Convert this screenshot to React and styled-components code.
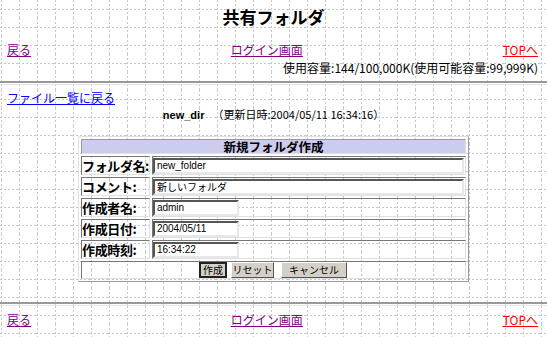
import React from 'react';
import styled, { createGlobalStyle } from 'styled-components';

const gridSvg = encodeURIComponent(
  "<svg xmlns='http://www.w3.org/2000/svg' width='18' height='18'>" +
    "<line x1='1.5' y1='0' x2='1.5' y2='18' stroke='#c8c8c8' stroke-width='1' stroke-dasharray='2 2'/>" +
    "<line x1='0' y1='9.5' x2='18' y2='9.5' stroke='#c8c8c8' stroke-width='1' stroke-dasharray='2 2'/>" +
    '</svg>'
);

const GlobalStyle = createGlobalStyle`
  html, body {
    margin: 0;
    padding: 0;
  }
  body {
    background: #fff url("data:image/svg+xml,${gridSvg}") 0 0 repeat;
    font-family: "Noto Sans CJK JP", "Liberation Sans", sans-serif;
    font-size: 12px;
    color: #000;
  }
`;

const Page = styled.div`
  width: 547px;
  height: 337px;
  overflow: hidden;
`;

const Title = styled.h1`
  margin: 0;
  padding-top: 5px;
  height: 34px;
  text-align: center;
  font-size: 17px;
  font-weight: bold;
  line-height: 24px;
`;

const NavRow = styled.div`
  display: flex;
  justify-content: space-between;
  align-items: center;
  padding: 0 9px 0 7px;
  height: 22px;
`;

const Link = styled.a`
  color: ${(p) => p.$color || '#800080'};
  text-decoration: underline;
  font-size: 12px;
  line-height: 14px;
  cursor: pointer;
`;

const Usage = styled.div`
  text-align: right;
  padding-right: 9px;
  font-size: 12px;
  line-height: 14px;
  height: 16px;
`;

const Rule = styled.div`
  height: 1px;
  border-top: 2px solid #999;
  border-bottom: 1px solid #e4e4e4;
  margin: ${(p) => p.$margin};
`;

const BackLink = styled.div`
  padding-left: 7px;
  height: 18px;
`;

const DirLine = styled.div`
  text-align: center;
  font-size: 11px;
  line-height: 14px;
`;

const DirName = styled.b`
  font-family: "Liberation Sans", sans-serif;
  margin-right: 8px;
`;

const FormWrap = styled.div`
  display: flex;
  justify-content: center;
  margin-top: 14px;
`;

const FormTable = styled.table`
  width: 389px;
  border: 1px solid;
  border-color: #e0e0e0 #999 #999 #e0e0e0;
  border-spacing: 2px;
  border-collapse: separate;
`;

const HeadCell = styled.th`
  background: #ccccee;
  font-size: 12.5px;
  font-weight: bold;
  line-height: 13px;
  height: 13px;
  padding: 0;
  text-align: center;
  border: 1px solid;
  border-color: #999 #e0e0e0 #e0e0e0 #999;
`;

const LabelCell = styled.td`
  width: 65px;
  height: 17px;
  font-size: 13px;
  letter-spacing: -0.4px;
  font-weight: bold;
  line-height: 17px;
  padding: 0;
  white-space: nowrap;
  overflow: hidden;
  border: 1px solid;
  border-color: #777 #e0e0e0 #e0e0e0 #777;
`;

const FieldCell = styled.td`
  height: ${(p) => p.$h || 17}px;
  padding: 0 1px 0 0;
  border: 1px solid;
  border-color: #777 #e0e0e0 #e0e0e0 #777;
  vertical-align: middle;
  line-height: 0;
`;

const ButtonBar = styled.div`
  display: flex;
  justify-content: center;
  align-items: center;
  height: 16px;
`;

const TextInput = styled.input`
  box-sizing: border-box;
  width: ${(p) => (p.$wide ? 311 : 86)}px;
  height: 16px;
  margin: 0;
  padding: 0 2px;
  font-family: "Liberation Sans", "Noto Sans CJK JP", sans-serif;
  font-size: 10px;
  color: #000;
  background: #fff;
  border: 2px solid;
  border-color: #555 #e8e8e8 #e8e8e8 #555;
  outline: none;
  vertical-align: middle;
`;

const Button = styled.button`
  box-sizing: border-box;
  width: ${(p) => p.$w}px;
  height: 16px;
  margin: 0 0 0 ${(p) => p.$gap || 0}px;
  padding: 0;
  font-family: "Noto Sans CJK JP", sans-serif;
  font-size: 10px;
  line-height: 12px;
  background: #d4d0c8;
  color: #000;
  border: ${(p) => (p.$default ? 2 : 1)}px solid;
  border-color: ${(p) => (p.$default ? '#222' : '#fff #555 #555 #fff')};
`;

const fields = [
  { label: 'フォルダ名:', value: 'new_folder', wide: true },
  { label: 'コメント:', value: '新しいフォルダ', wide: true },
  { label: '作成者名:', value: 'admin' },
  { label: '作成日付:', value: '2004/05/11' },
  { label: '作成時刻:', value: '16:34:22' },
];

function Nav() {
  return (
    <NavRow>
      <Link>戻る</Link>
      <Link>ログイン画面</Link>
      <Link $color="#ff0000">TOPへ</Link>
    </NavRow>
  );
}

export default function App() {
  return (
    <Page>
      <GlobalStyle />
      <Title>共有フォルダ</Title>
      <Nav />
      <Usage>使用容量:144/100,000K(使用可能容量:99,999K)</Usage>
      <Rule $margin="4px 0 4px" />
      <BackLink>
        <Link $color="#0000ff">ファイル一覧に戻る</Link>
      </BackLink>
      <DirLine>
        <DirName>new_dir</DirName>（更新日時:2004/05/11 16:34:16）
      </DirLine>
      <FormWrap>
        <FormTable>
          <tbody>
            <tr>
              <HeadCell colSpan={2}>新規フォルダ作成</HeadCell>
            </tr>
            {fields.map((f) => (
              <tr key={f.label}>
                <LabelCell>{f.label}</LabelCell>
                <FieldCell>
                  <TextInput $wide={f.wide} defaultValue={f.value} />
                </FieldCell>
              </tr>
            ))}
            <tr>
              <FieldCell colSpan={2} $h={16}>
                <ButtonBar>
                  <Button $default $w={28}>作成</Button>
                  <Button $w={43} $gap={4}>リセット</Button>
                  <Button $w={66} $gap={7}>キャンセル</Button>
                </ButtonBar>
              </FieldCell>
            </tr>
          </tbody>
        </FormTable>
      </FormWrap>
      <Rule $margin="20px 0 3px" />
      <Nav />
    </Page>
  );
}
